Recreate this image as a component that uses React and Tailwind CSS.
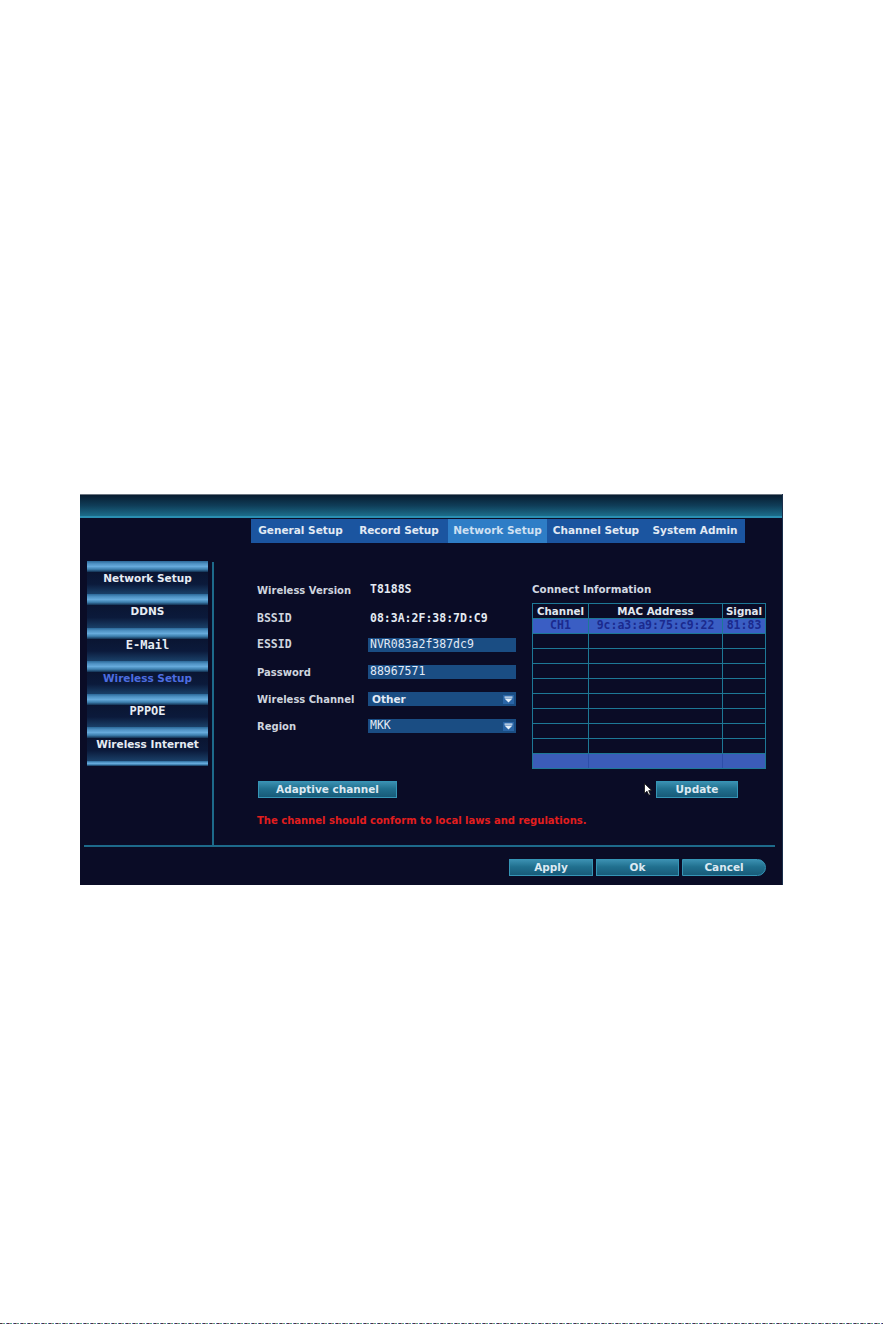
import React from 'react';

const sans = "font-['DejaVu_Sans','Verdana',sans-serif]";
const mono = "font-['DejaVu_Sans_Mono','Liberation_Mono',monospace]";

const tabs = ['General Setup', 'Record Setup', 'Network Setup', 'Channel Setup', 'System Admin'];

const menu = [
  { label: 'Network Setup', mono: false },
  { label: 'DDNS', mono: false },
  { label: 'E-Mail', mono: true },
  { label: 'Wireless Setup', mono: false, active: true },
  { label: 'PPPOE', mono: true },
  { label: 'Wireless Internet', mono: false },
];

const bandBg =
  'bg-[linear-gradient(180deg,#2b6898_0%,#4f92c4_25%,#66aadb_50%,#3d7fae_75%,#122f50_100%)]';

// Small white caret used by the drop-down fields
const Caret = () => (
  <svg width="11" height="9" viewBox="0 0 11 9" className="mr-[2px]">
    <rect x="0" y="0" width="11" height="9" fill="#2a65a6" />
    <rect x="1.5" y="1.5" width="8" height="1.2" fill="#e6f0fa" />
    <polygon points="1.5,3.4 9.5,3.4 5.5,7.6" fill="#e6f0fa" />
  </svg>
);

const Cursor = () => (
  <svg width="9" height="13" viewBox="0 0 9 13">
    <path
      d="M0.5 0.5 L0.5 10.5 L3 8.2 L4.8 12.2 L6.4 11.5 L4.7 7.6 L7.8 7.6 Z"
      fill="#ffffff"
      stroke="#111111"
      strokeWidth="0.8"
    />
  </svg>
);

const Button = ({ children, className = '' }) => (
  <button
    className={`h-[17px] border border-[#3595b6] bg-[linear-gradient(180deg,#3a8fb0_0%,#21708f_45%,#185b79_100%)] text-[#dce9f2] text-[10.5px] font-bold leading-none ${sans} ${className}`}
  >
    {children}
  </button>
);

const Row = ({ label, labelMono, className = '', children }) => (
  <div className={`flex items-center h-[20px] ${className}`}>
    <span
      className={`w-[111px] text-[#cfd5df] ${
        labelMono ? `${mono} text-[11.5px] font-bold` : `${sans} text-[10px] font-bold`
      }`}
    >
      {label}
    </span>
    {children}
  </div>
);

const Field = ({ children, select, monoText = true }) => (
  <div className="w-[148px] h-[14px] bg-[#1a4d83] flex items-center justify-between pl-[2px]">
    <span
      className={`text-[#e2eaf6] leading-none ${
        monoText ? `${mono} text-[11.5px]` : `${sans} text-[10.5px] font-bold pl-[2px]`
      }`}
    >
      {children}
    </span>
    {select && <Caret />}
  </div>
);

const cell = 'p-0 h-[15px] border border-[#1d7896] text-center leading-none';

export default function App() {
  const emptyRows = Array.from({ length: 8 });

  return (
    <div className="w-[883px] h-[1324px] bg-white flex flex-col">
      <div className="pt-[494px] pl-[80px] flex-1">
        <div className="w-[703px] h-[391px] bg-[#0a0c26] flex flex-col border-r border-[#1a2f4c]">
          {/* title bar */}
          <div className="h-px bg-[#6c7682]" />
          <div className="h-[21px] bg-[linear-gradient(180deg,#081c30_0%,#0f3d58_50%,#1c6d8b_100%)]" />
          <div className="h-[2px] bg-[#2b8fb2]" />

          {/* top tabs */}
          <div className="mt-px pl-[171px] flex">
            {tabs.map((t, i) => (
              <div
                key={t}
                className={`h-[24px] ${i === 4 ? 'w-[100px]' : i % 2 ? 'w-[98px]' : 'w-[99px]'} flex items-center justify-center text-[10.5px] font-bold ${sans} ${
                  t === 'Network Setup' ? 'bg-[#2e7dc6] text-[#cfe0f2]' : 'bg-[#1b55a0] text-[#e2eaf4]'
                }`}
              >
                {t}
              </div>
            ))}
          </div>

          <div className="mt-[18px] h-[284px] flex">
            {/* side menu */}
            <div className="w-[132px] pl-[7px]">
              <div className="w-[121px]">
                {menu.map((m) => (
                  <div key={m.label} className="h-[33.3px] flex flex-col">
                    <div className={`h-[11px] ${bandBg}`} />
                    <div className="flex-1 bg-[linear-gradient(180deg,#0a1532_0%,#0b1a3b_55%,#1a4068_100%)] flex justify-center">
                      <span
                        className={`leading-[12px] ${
                          m.mono ? `${mono} text-[12px] font-bold` : `${sans} text-[10.5px] font-bold`
                        } ${m.active ? 'text-[#4d6de0]' : 'text-[#e6ecf4]'}`}
                      >
                        {m.label}
                      </span>
                    </div>
                  </div>
                ))}
                <div className={`h-[5px] ${bandBg}`} />
              </div>
            </div>

            <div className="w-[2px] mt-px bg-[#1d6a8a]" />

            {/* wireless settings */}
            <div className="flex-1 pl-[43px] pt-[19px]">
              <div className="flex">
                <div className="w-[275px]">
                  <Row label="Wireless Version">
                    <span className={`${mono} text-[11.5px] font-bold text-[#e4eaf2] pl-[2px]`}>T8188S</span>
                  </Row>
                  <Row label="BSSID" labelMono className="mt-[9px]">
                    <span className={`${mono} text-[11.5px] font-bold text-[#e4eaf2] pl-[2px]`}>08:3A:2F:38:7D:C9</span>
                  </Row>
                  <Row label="ESSID" labelMono className="mt-[6px]">
                    <Field>NVR083a2f387dc9</Field>
                  </Row>
                  <Row label="Password" className="mt-[7px]">
                    <Field>88967571</Field>
                  </Row>
                  <Row label="Wireless Channel" className="mt-[7px]">
                    <Field select monoText={false}>Other</Field>
                  </Row>
                  <Row label="Region" className="mt-[7px]">
                    <Field select>MKK</Field>
                  </Row>
                </div>

                <div className="w-[233px]">
                  <div className={`h-[20px] flex items-center text-[10.3px] font-bold text-[#d2d8e2] ${sans}`}>
                    Connect Information
                  </div>
                  <table className="mt-[3px] w-[233px] table-fixed border-collapse">
                    <colgroup>
                      <col className="w-[56px]" />
                      <col className="w-[134px]" />
                      <col className="w-[43px]" />
                    </colgroup>
                    <thead>
                      <tr className={`text-[10.3px] font-bold text-[#e2e8f0] ${sans}`}>
                        <th className={cell}>Channel</th>
                        <th className={cell}>MAC Address</th>
                        <th className={cell}>Signal</th>
                      </tr>
                    </thead>
                    <tbody>
                      <tr className={`bg-[#3a5ec4] text-[#1b2a8e] text-[11.5px] font-bold ${mono}`}>
                        <td className={cell}>CH1</td>
                        <td className={cell}>9c:a3:a9:75:c9:22</td>
                        <td className={cell}>81:83</td>
                      </tr>
                      {emptyRows.map((_, i) => (
                        <tr key={i}>
                          <td className={cell} />
                          <td className={cell} />
                          <td className={cell} />
                        </tr>
                      ))}
                      <tr className="bg-[#3b5cb8]">
                        <td className="p-0 h-[15px] border border-[#2d4ea8] border-l-[#1d7896] border-b-[#1d7896]" />
                        <td className="p-0 h-[15px] border border-[#2d4ea8] border-b-[#1d7896]" />
                        <td className="p-0 h-[15px] border border-[#2d4ea8] border-r-[#1d7896] border-b-[#1d7896]" />
                      </tr>
                    </tbody>
                  </table>
                </div>
              </div>

              <div className="mt-[12px] w-[508px] flex items-center">
                <Button className="ml-px w-[139px]">Adaptive channel</Button>
                <div className="flex-1" />
                <Cursor />
                <Button className="ml-[3px] mr-[27px] w-[82px]">Update</Button>
              </div>

              <p className={`mt-[16px] h-[14px] leading-[14px] text-[10px] font-bold text-[#e21e1e] ${sans}`}>
                The channel should conform to local laws and regulations.
              </p>
            </div>
          </div>

          <div className="ml-[4px] mr-[7px] h-[2px] bg-[#1d6a8a]" />

          {/* footer actions */}
          <div className="mt-[12px] pr-[16px] flex justify-end gap-[3px]">
            <Button className="w-[84px]">Apply</Button>
            <Button className="w-[83px]">Ok</Button>
            <Button className="w-[84px] rounded-r-full">Cancel</Button>
          </div>
        </div>
      </div>
      <div className="h-px bg-[repeating-linear-gradient(90deg,#3d3d3d_0px,#3d3d3d_2px,#b06a8a_2px,#b06a8a_3px,#5aa088_3px,#5aa088_5px,#ffffff_5px,#ffffff_6px,#6a6ad0_6px,#6a6ad0_7px)]" />
    </div>
  );
}
